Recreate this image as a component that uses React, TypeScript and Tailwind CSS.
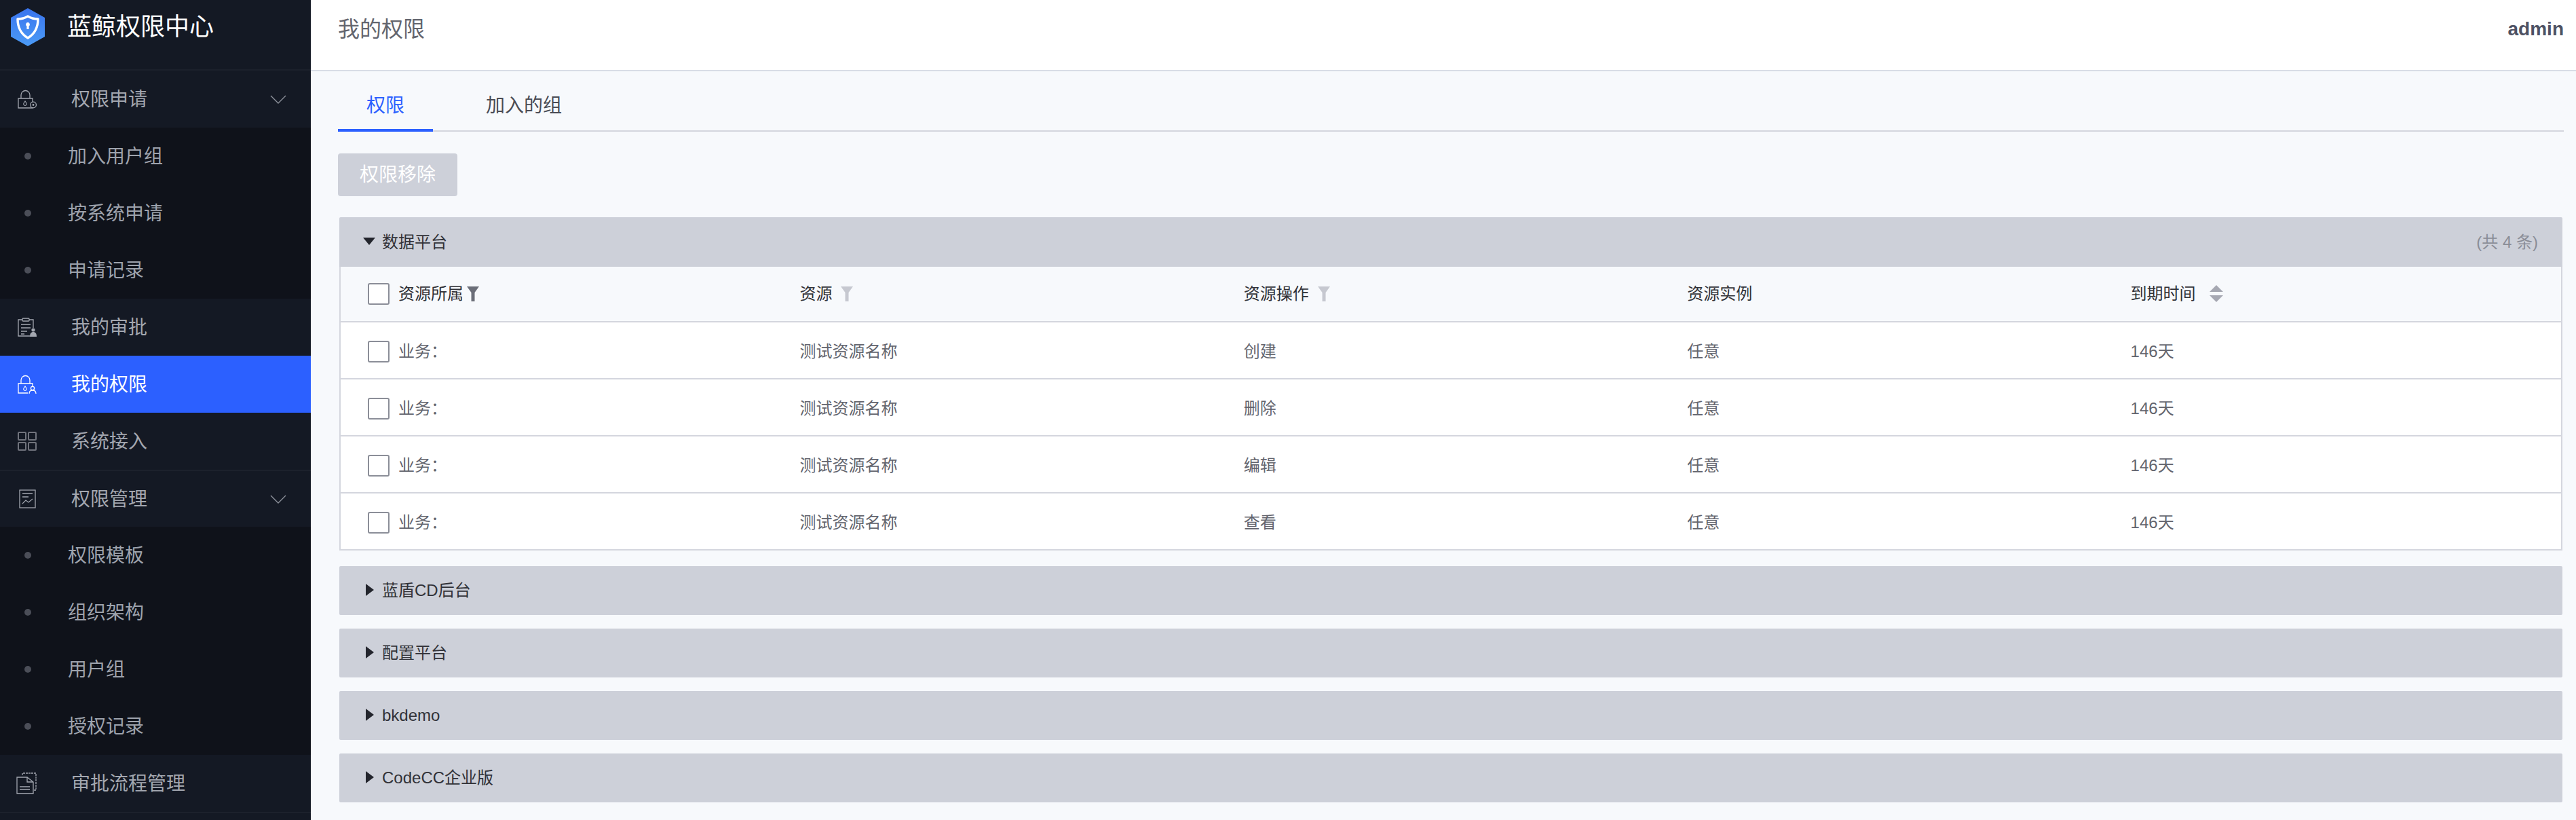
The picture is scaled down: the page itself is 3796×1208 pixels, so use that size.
const font = { fontFamily: '"Liberation Sans", "Noto Sans CJK SC", sans-serif' }

function Logo() {
  return (
    <svg width="52" height="58" viewBox="0 0 52 58" className="ml-[15px] shrink-0">
      <defs>
        <linearGradient id="hex" x1="0" y1="0" x2="0" y2="1">
          <stop offset="0" stopColor="#3a74ee" />
          <stop offset="1" stopColor="#4b9bf6" />
        </linearGradient>
      </defs>
      <path d="M26 1 L51 15 V43 L26 57 L1 43 V15 Z" fill="url(#hex)" />
      <path d="M26 13 C31 16 36 17 41 17 C41 29 36 39 26 45 C16 39 11 29 11 17 C16 17 21 16 26 13 Z" fill="none" stroke="#fff" strokeWidth="3.4" strokeLinejoin="round" />
      <path d="M26 22 a3 3 0 0 1 1.6 5.5 V32 h-3.2 V27.5 A3 3 0 0 1 26 22 Z" fill="#fff" />
    </svg>
  )
}

function LockIcon({ badge }: { badge: 'gear' | 'user' }) {
  const cut = badge === 'gear' ? '#141924' : '#2c60ff'
  return (
    <svg width="28" height="28" viewBox="0 0 28 28" fill="none" stroke="currentColor" strokeWidth="1.3">
      <path d="M1 13 H22 V27 H1 Z" />
      <path d="M5 13 V8 a6.5 6.5 0 0 1 13 0 V13" />
      <path d="M11 17 l-2 3 a2.3 2.3 0 1 0 4 0 Z" strokeWidth="1.1" />
      {badge === 'gear' ? (
        <g>
          <circle cx="23" cy="22.5" r="4.4" fill={cut} />
          <circle cx="23" cy="22.5" r="1.4" fill="currentColor" stroke="none" />
        </g>
      ) : (
        <g>
          <rect x="15" y="17" width="13" height="11" fill={cut} stroke="none" />
          <path d="M17 28 c0-4 2-5 5-5 s5 1 5 5" />
          <circle cx="22" cy="20" r="2.6" />
        </g>
      )}
    </svg>
  )
}

function ClipboardIcon() {
  return (
    <svg width="28" height="28" viewBox="0 0 28 28" fill="none" stroke="currentColor" strokeWidth="1.3">
      <path d="M7 3 H1 V27 H18 M23 15 V3 H17" />
      <rect x="7" y="1" width="10" height="4" rx="1" />
      <path d="M5 10 H19 M5 15 H19 M5 20 H14 M5 24 H10" />
      <circle cx="23" cy="18" r="2.6" fill="currentColor" stroke="none" />
      <path d="M18 28 c0-5 2-7 5-7 s5 2 5 7 Z" fill="currentColor" stroke="none" />
    </svg>
  )
}

function GridIcon() {
  return (
    <svg width="28" height="28" viewBox="0 0 28 28" fill="none" stroke="#70737c" strokeWidth="2">
      <rect x="1" y="1" width="11" height="11" rx="1" />
      <rect x="16" y="1" width="11" height="11" rx="1" />
      <rect x="1" y="16" width="11" height="11" rx="1" />
      <rect x="16" y="16" width="11" height="11" rx="1" />
    </svg>
  )
}

function ReportIcon() {
  return (
    <svg width="28" height="28" viewBox="0 0 28 28" fill="none" stroke="currentColor" strokeWidth="1.3">
      <rect x="3" y="1" width="23" height="26" />
      <path d="M7 6 H22 M7 11 H16" />
      <path d="M7 21 L12 16 L16 19 L22 14" strokeWidth="1.1" />
    </svg>
  )
}

function DocsIcon() {
  return (
    <svg width="30" height="32" viewBox="0 0 30 32" fill="none" stroke="currentColor" strokeWidth="1.3" className="-ml-[2px]">
      <path d="M9 4 V1 H29 V26 H25" strokeDasharray="3 1" />
      <path d="M1 7 H16 L25 14 V31 H1 Z" />
      <path d="M16 7 V14 H25" />
      <path d="M5 21 H20 M5 25 H20" />
    </svg>
  )
}

function Chevron() {
  return (
    <svg width="24" height="13" viewBox="0 0 24 13" fill="none" stroke="#8d919b" strokeWidth="1.4" className="ml-auto mr-[36px]">
      <path d="M1 1 L12 12 L23 1" />
    </svg>
  )
}

function NavItem({ icon, label, active, arrow, topLine }: { icon: React.ReactNode; label: string; active?: boolean; arrow?: boolean; topLine?: boolean }) {
  return (
    <div className={`flex h-[84px] items-center text-[28px] ${active ? 'bg-[#2c60ff] text-white' : 'bg-[#141924] text-[#a3a7b0]'} ${topLine ? 'border-t-2 border-[#1c212c]' : ''}`}>
      <span className="ml-[26px] flex w-[79px] shrink-0">{icon}</span>
      <span className="pt-[2px]">{label}</span>
      {arrow ? <Chevron /> : null}
    </div>
  )
}

function SubItem({ label }: { label: string }) {
  return (
    <div className="flex h-[84px] items-center bg-[#0f121a] text-[28px] text-[#9ea3ad]">
      <span className="ml-[36px] h-[10px] w-[10px] rounded-full bg-[#4b4e58]" />
      <span className="ml-[54px] pt-[2px]">{label}</span>
    </div>
  )
}

function Sidebar() {
  return (
    <aside className="flex h-[1208px] w-[458px] shrink-0 flex-col overflow-hidden bg-[#141924]">
      <div className="flex h-[104px] shrink-0 items-center border-b-2 border-[#1c212c] pb-[22px]">
        <Logo />
        <span className="ml-[32px] text-[36px] text-white">蓝鲸权限中心</span>
      </div>
      <NavItem icon={<LockIcon badge="gear" />} label="权限申请" arrow />
      <SubItem label="加入用户组" />
      <SubItem label="按系统申请" />
      <SubItem label="申请记录" />
      <NavItem icon={<ClipboardIcon />} label="我的审批" />
      <NavItem icon={<LockIcon badge="user" />} label="我的权限" active />
      <NavItem icon={<GridIcon />} label="系统接入" />
      <NavItem icon={<ReportIcon />} label="权限管理" arrow topLine />
      <SubItem label="权限模板" />
      <SubItem label="组织架构" />
      <SubItem label="用户组" />
      <SubItem label="授权记录" />
      <NavItem icon={<DocsIcon />} label="审批流程管理" />
      <div className="grow border-t-2 border-[#1c212c]" />
    </aside>
  )
}

function Funnel({ dark }: { dark?: boolean }) {
  return (
    <svg width="18" height="22" viewBox="0 0 18 22" className={dark ? 'ml-[5px]' : 'ml-[13px]'} fill={dark ? '#6b6e78' : '#c6c8d0'}>
      <path d="M0 0 H18 L11.5 9 V22 H6.5 V9 Z" />
    </svg>
  )
}

function SortIcon() {
  return (
    <svg width="20" height="26" viewBox="0 0 20 26" className="ml-[20px]" fill="#a6a8b2">
      <path d="M10 0 L20 10 H0 Z" />
      <path d="M0 15 H20 L10 25 Z" />
    </svg>
  )
}

function Check() {
  return <span className="mr-[13px] h-[32px] w-[32px] shrink-0 rounded-[3px] border-2 border-[#8b8e98] bg-white" />
}

const rows = ['创建', '删除', '编辑', '查看']

function PermTable() {
  return (
    <div className="border-x-2 border-[#d4d6de] text-[24px]">
      <div className="grid h-[82px] grid-cols-5 items-center border-b-2 border-[#d4d6de] bg-[#f7f9fc] text-[#313238]">
        <div className="flex items-center pl-[40px]">
          <Check />
          <span>资源所属</span>
          <Funnel dark />
        </div>
        <div className="flex items-center pl-[22px]">
          <span>资源</span>
          <Funnel />
        </div>
        <div className="flex items-center pl-[22px]">
          <span>资源操作</span>
          <Funnel />
        </div>
        <div className="pl-[21px]">资源实例</div>
        <div className="flex items-center pl-[20px]">
          <span>到期时间</span>
          <SortIcon />
        </div>
      </div>
      {rows.map((op) => (
        <div key={op} className="grid h-[84px] grid-cols-5 items-center border-b-2 border-[#d4d6de] bg-white pt-[3px] text-[#63656e]">
          <div className="flex items-center pl-[40px]">
            <Check />
            <span>业务：</span>
          </div>
          <div className="pl-[22px]">测试资源名称</div>
          <div className="pl-[22px]">{op}</div>
          <div className="pl-[21px]">任意</div>
          <div className="pl-[20px]">146天</div>
        </div>
      ))}
    </div>
  )
}

function Collapsed({ name }: { name: string }) {
  return (
    <div className="flex h-[72px] items-center rounded-[2px] bg-[#cdd0d9] pl-[39px] text-[24px] text-[#313238]">
      <svg width="12" height="18" viewBox="0 0 12 18" className="mr-[12px] -mt-[2px]" fill="#23252d">
        <path d="M0 0 L12 9 L0 18 Z" />
      </svg>
      <span>{name}</span>
    </div>
  )
}

export default function App() {
  return (
    <div className="flex h-[1208px] w-[3796px] overflow-hidden bg-[#f7f9fc]" style={font}>
      <Sidebar />
      <main className="min-w-0 grow">
        <header className="flex h-[105px] items-center justify-between border-b-2 border-[#d8dde6] bg-white pb-[18px] pl-[40px] pr-[18px]">
          <span className="text-[32px] text-[#63656e]">我的权限</span>
          <span className="text-[28px] font-bold text-[#4d5163]">admin</span>
        </header>

        <div className="ml-[40px] mr-[18px] flex h-[89px] items-end border-b-2 border-[#d4d6de]">
          <div className="-mb-[2px] flex h-[89px] w-[140px] items-center justify-center border-b-4 border-[#2c60ff] pt-[16px] text-[28px] text-[#2c60ff]">
            权限
          </div>
          <div className="-mb-[2px] ml-[78px] flex h-[89px] items-center pt-[12px] text-[28px] text-[#4a4c55]">
            加入的组
          </div>
        </div>

        <button className="ml-[40px] mt-[32px] block h-[63px] w-[176px] rounded-[4px] bg-[#cdd0d9] text-center text-[28px] text-white">
          权限移除
        </button>

        <section className="ml-[42px] mr-[20px] mt-[31px] flex flex-col">
          <div className="flex h-[73px] items-center justify-between rounded-t-[2px] bg-[#cdd0d9] pl-[35px] pr-[36px] text-[24px]">
            <span className="flex items-center text-[#313238]">
              <svg width="18" height="11" viewBox="0 0 18 11" className="mr-[10px] -mt-[2px]" fill="#23252d">
                <path d="M0 0 H18 L9 11 Z" />
              </svg>
              数据平台
            </span>
            <span className="text-[#8a8d97]">(共 4 条)</span>
          </div>
          <PermTable />
          <div className="mt-[23px] flex flex-col gap-[20px]">
            <Collapsed name="蓝盾CD后台" />
            <Collapsed name="配置平台" />
            <Collapsed name="bkdemo" />
            <Collapsed name="CodeCC企业版" />
          </div>
        </section>
      </main>
    </div>
  )
}
